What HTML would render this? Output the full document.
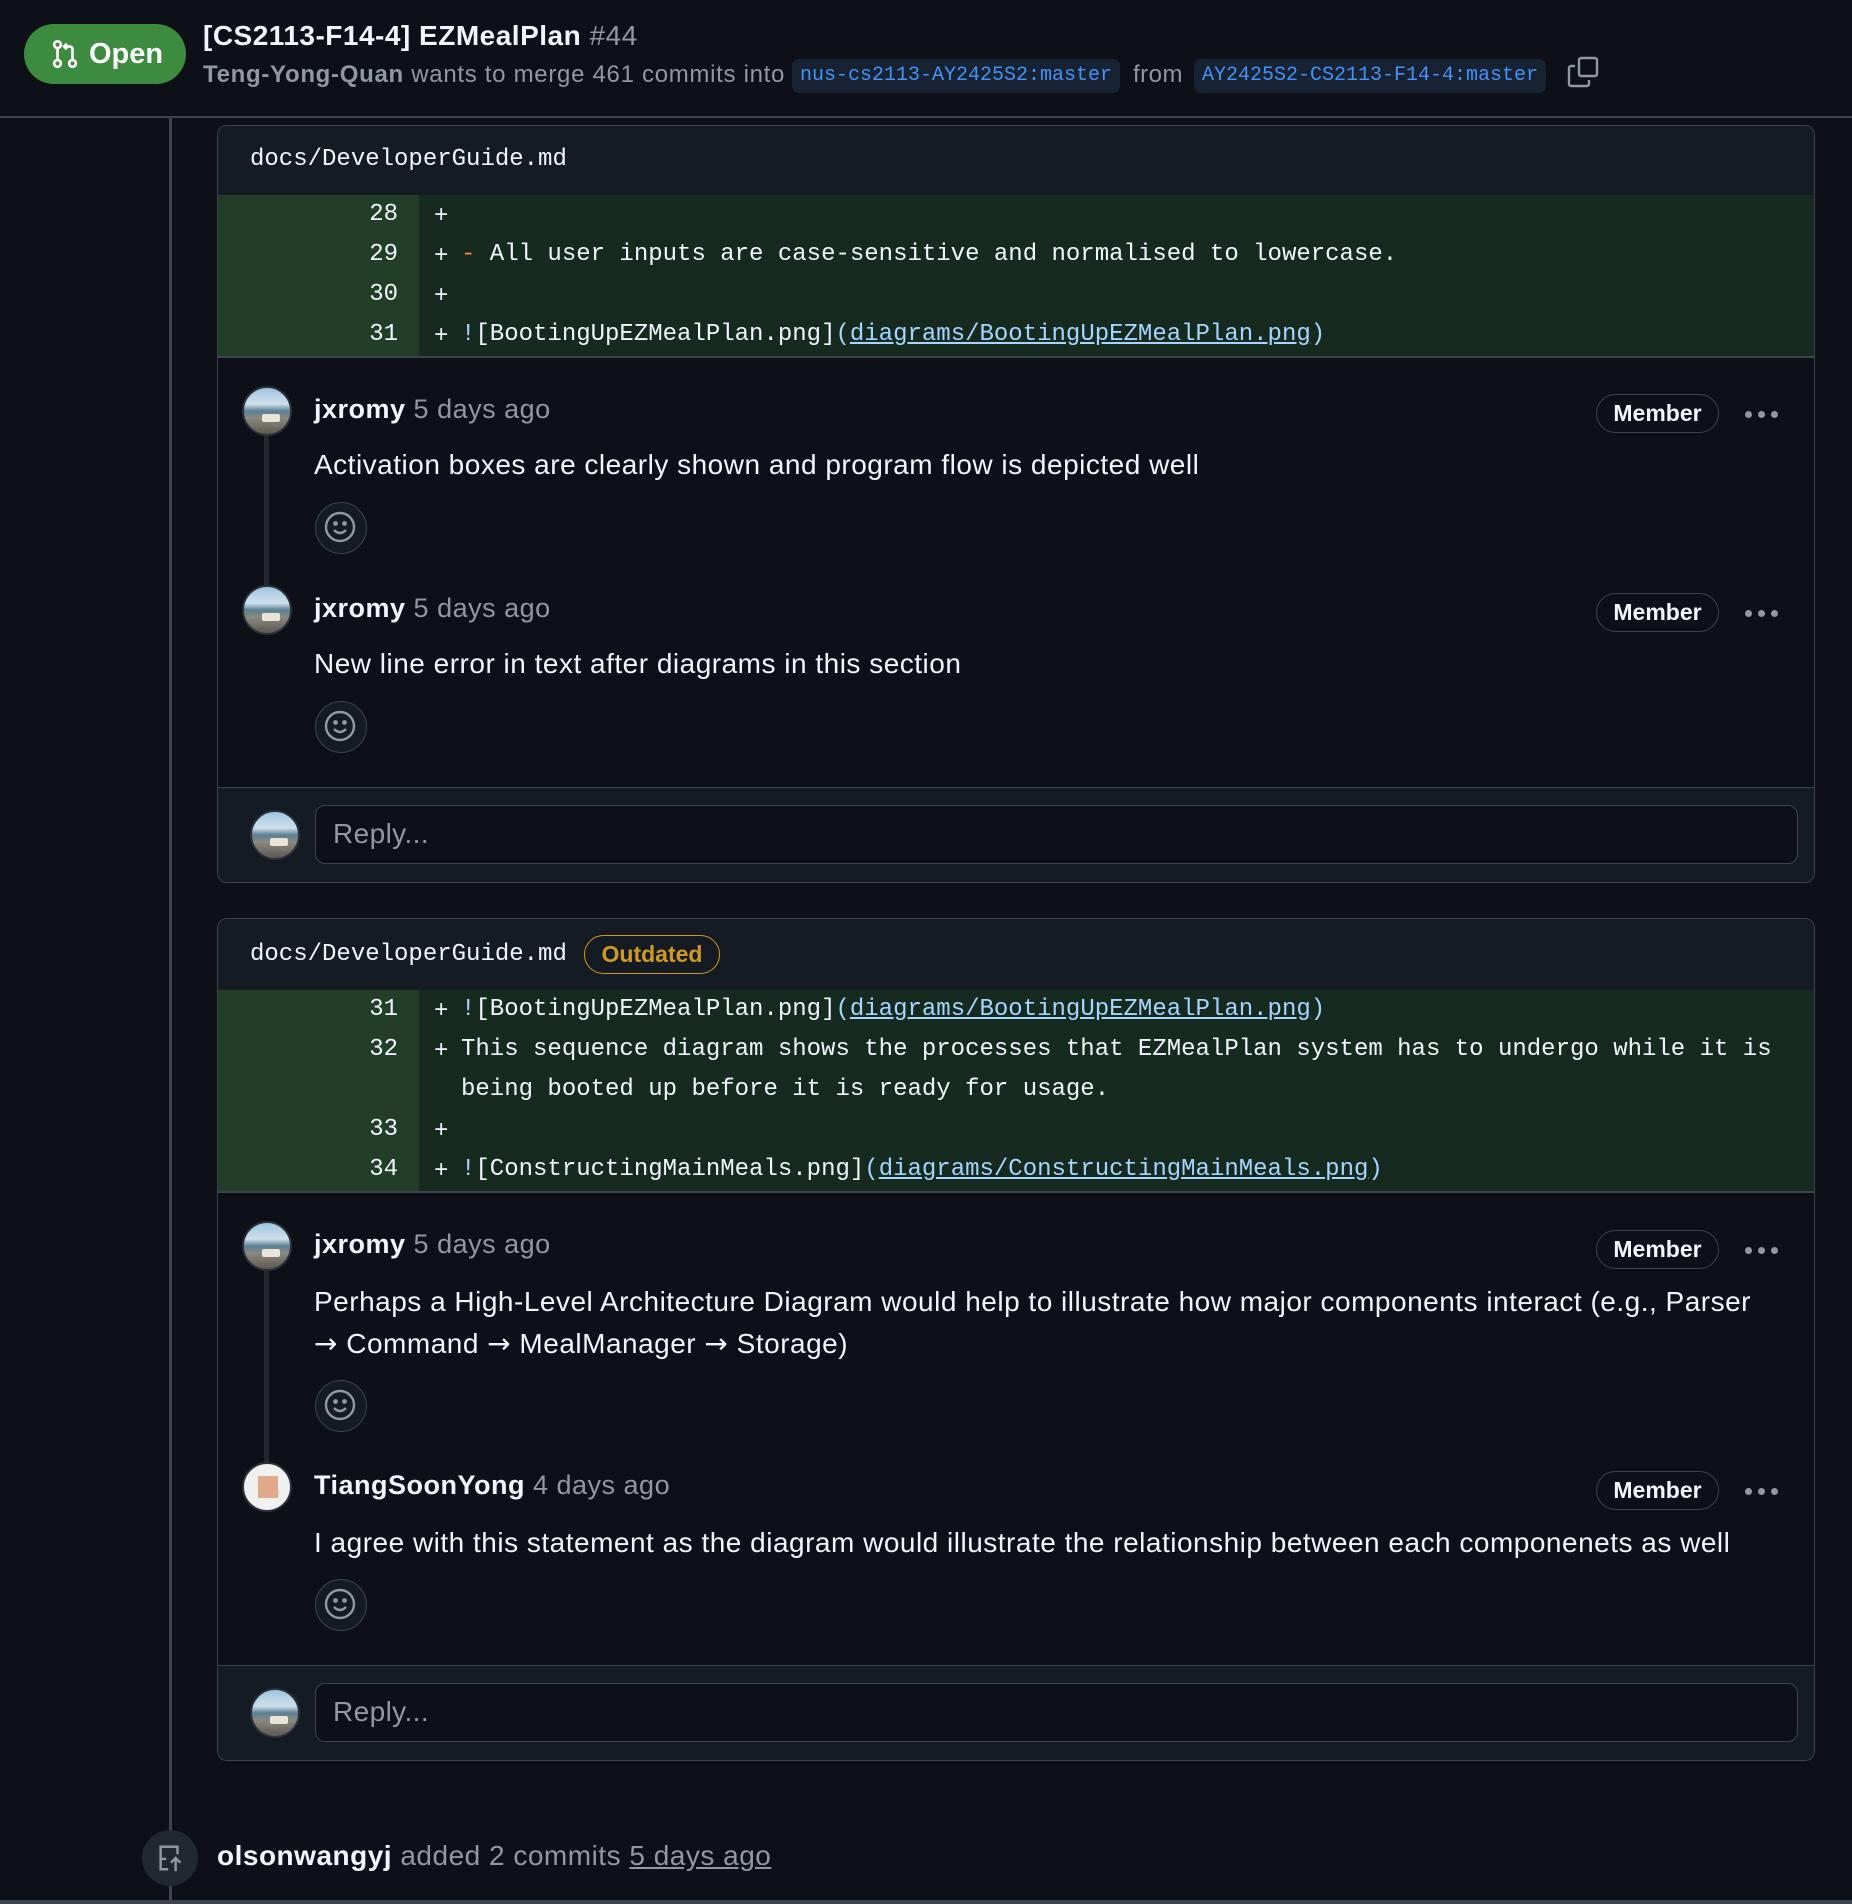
<!DOCTYPE html>
<html><head><meta charset="utf-8">
<style>
*{box-sizing:border-box;margin:0;padding:0}
body{width:1852px;height:1904px;background:#0d1117;position:relative;overflow:hidden;font-family:"Liberation Sans",Arial,sans-serif;color:#f0f6fc}
.a{position:absolute}
.mono{font-family:"Liberation Mono",monospace}
.box{position:absolute;left:217px;width:1598px;border:1.5px solid #3d444d;border-radius:10px;overflow:hidden;background:#0d1117}
.fh{position:absolute;left:0;right:0;top:0;background:#151b23;border-bottom:1.5px solid #3d444d}
.fname{position:absolute;left:32px;font-size:24px;color:#f0f6fc}
.diff{position:absolute;left:0;right:0;background:#172a20}
.num{position:absolute;left:0;width:201px;top:0;bottom:0;background:#233e28}
.ln{position:absolute;left:0;width:180px;text-align:right;font-size:24px;color:#f0f6fc;line-height:40px}
.pl{position:absolute;left:216px;font-size:24px;line-height:40px}
.code{position:absolute;left:243px;font-size:24px;line-height:40px;white-space:pre;color:#f0f6fc}
.lk{color:#a5d6ff;text-decoration:underline}
.br{color:#a5d6ff}
.av{position:absolute;width:50px;height:50px;border-radius:50%;border:2px solid #2a313c;background:linear-gradient(#9fc4df 0%,#cfe0ea 35%,#5a7f94 50%,#8a8a80 65%,#5d574f 100%);overflow:hidden}
.av:after{content:"";position:absolute;left:18px;top:26px;width:18px;height:8px;background:#e8e4da;border-radius:2px}
.name{position:absolute;font-size:27px;font-weight:bold;color:#f0f6fc;white-space:nowrap;letter-spacing:0.5px}
.name span{font-weight:normal;color:#9198a1}
.txt{position:absolute;font-size:28px;letter-spacing:0.5px;color:#f0f6fc;white-space:nowrap;line-height:42px}
.smi{position:absolute;width:52px;height:52px;border-radius:50%;border:1.5px solid #3d444d;background:#151b23}
.mem{position:absolute;width:123px;height:39px;border:1.5px solid #3d444d;border-radius:20px;font-size:23px;font-weight:bold;text-align:center;line-height:36px;color:#f0f6fc}
.dots{position:absolute;width:40px;height:8px}
.dots:before{content:"";position:absolute;left:2px;top:0;width:7px;height:7px;border-radius:50%;background:#9198a1;box-shadow:13px 0 0 #9198a1,26px 0 0 #9198a1}
.vline{position:absolute;width:5px;background:#212830}
.rep{position:absolute;left:0;right:0;background:#151b23;border-top:1.5px solid #3d444d}
.inp{position:absolute;left:97px;right:16px;height:59px;border:1.5px solid #3d444d;border-radius:10px;background:#0d1117;font-size:28px;letter-spacing:0.4px;color:#9198a1;padding-left:17px;line-height:56px}
.pill{position:absolute;top:59px;height:34px;background:#172233;border-radius:7px;color:#4493f8;font-size:20px;line-height:34px;padding:0 8px}
</style></head><body>

<!-- header -->
<div class="a" style="left:24px;top:24px;width:162px;height:60px;background:#3d8b3f;border-radius:30px;"></div>
<svg class="a" style="left:50px;top:38px" width="30" height="32" viewBox="0 0 16 16" fill="none" stroke="#fff" stroke-width="1.4"><circle cx="4" cy="3" r="1.8"/><circle cx="4" cy="13" r="1.8"/><circle cx="12" cy="13" r="1.8"/><path d="M4 5v6M12 11V5.5c0-1-.6-1.5-1.5-1.5H7.5M9 2.5 7.5 4 9 5.5"/></svg>
<div class="a" style="left:89px;top:38px;font-size:29px;font-weight:bold;color:#fff">Open</div>
<div class="a" style="left:203px;top:20px;font-size:28px;font-weight:bold;color:#f0f6fc;white-space:nowrap;letter-spacing:0.5px">[CS2113-F14-4] EZMealPlan <span style="font-weight:normal;color:#9198a1">#44</span></div>
<div class="a" style="left:203px;top:61px;font-size:24px;letter-spacing:0.7px;color:#9198a1;white-space:nowrap"><b style="color:#9198a1">Teng-Yong-Quan</b> wants to merge 461 commits into</div>
<div class="pill mono" style="left:792px">nus-cs2113-AY2425S2:master</div>
<div class="a" style="left:1133px;top:61px;font-size:24px;letter-spacing:0.5px;color:#9198a1">from</div>
<div class="pill mono" style="left:1194px">AY2425S2-CS2113-F14-4:master</div>
<svg class="a" style="left:1567px;top:55px" width="32" height="34" viewBox="0 0 16 16" fill="none" stroke="#9198a1" stroke-width="1.2"><rect x="6" y="1" width="9" height="9" rx="1"/><path d="M4 5H2a1 1 0 0 0-1 1v8a1 1 0 0 0 1 1h8a1 1 0 0 0 1-1v-2"/></svg>
<div class="a" style="left:0;top:116px;width:1852px;height:2px;background:#3d444d"></div>

<!-- timeline -->
<div class="a" style="left:169px;top:118px;width:3px;height:1712px;background:#3d444d"></div>
<div class="a" style="left:169px;top:1884px;width:3px;height:20px;background:#3d444d"></div>

<!-- box 1 -->
<div class="box" style="top:125px;height:758px">
  <div class="fh" style="height:70px"><div class="fname mono" style="top:20px">docs/DeveloperGuide.md</div></div>
  <div class="diff" style="top:69px;height:161px">
    <div class="num"></div>
    <div class="ln mono" style="top:0">28</div><div class="pl mono" style="top:2px">+</div>
    <div class="ln mono" style="top:40px">29</div><div class="pl mono" style="top:42px">+</div><div class="code mono" style="top:40px"><span style="color:#f0883e">-</span> All user inputs are case-sensitive and normalised to lowercase.</div>
    <div class="ln mono" style="top:80px">30</div><div class="pl mono" style="top:82px">+</div>
    <div class="ln mono" style="top:120px">31</div><div class="pl mono" style="top:122px">+</div><div class="code mono" style="top:120px"><span class="br">!</span>[BootingUpEZMealPlan.png]<span class="br">(</span><span class="lk">diagrams/BootingUpEZMealPlan.png</span><span class="br">)</span></div>
  </div>
  <div class="a" style="left:0;right:0;top:230px;height:1.5px;background:#3d444d"></div>

  <div class="vline" style="left:46px;top:300px;height:200px"></div>
  <div class="av" style="left:24px;top:260px"></div>
  <div class="name" style="left:96px;top:268px">jxromy <span>5 days ago</span></div>
  <div class="mem" style="left:1378px;top:268px">Member</div>
  <div class="dots" style="left:1525px;top:285px"></div>
  <div class="txt" style="left:96px;top:318px">Activation boxes are clearly shown and program flow is depicted well</div>
  <div class="smi" style="left:97px;top:376px"></div>

  <div class="av" style="left:24px;top:459px"></div>
  <div class="name" style="left:96px;top:467px">jxromy <span>5 days ago</span></div>
  <div class="mem" style="left:1378px;top:467px">Member</div>
  <div class="dots" style="left:1525px;top:484px"></div>
  <div class="txt" style="left:96px;top:517px">New line error in text after diagrams in this section</div>
  <div class="smi" style="left:97px;top:575px"></div>

  <div class="rep" style="top:661px;height:100px">
    <div class="av" style="left:32px;top:22px"></div>
    <div class="inp" style="top:17px">Reply...</div>
  </div>
</div>

<!-- box 2 -->
<div class="box" style="top:918px;height:843px">
  <div class="fh" style="height:72px"><div class="fname mono" style="top:22px">docs/DeveloperGuide.md</div>
    <div class="a" style="left:366px;top:16px;width:136px;height:39px;border:1.5px solid #d29922;border-radius:20px;color:#d29922;font-size:23px;font-weight:bold;text-align:center;line-height:36px">Outdated</div></div>
  <div class="diff" style="top:71px;height:201px">
    <div class="num"></div>
    <div class="ln mono" style="top:0">31</div><div class="pl mono" style="top:2px">+</div><div class="code mono" style="top:0"><span class="br">!</span>[BootingUpEZMealPlan.png]<span class="br">(</span><span class="lk">diagrams/BootingUpEZMealPlan.png</span><span class="br">)</span></div>
    <div class="ln mono" style="top:40px">32</div><div class="pl mono" style="top:42px">+</div><div class="code mono" style="top:40px">This sequence diagram shows the processes that EZMealPlan system has to undergo while it is</div>
    <div class="code mono" style="top:80px">being booted up before it is ready for usage.</div>
    <div class="ln mono" style="top:120px">33</div><div class="pl mono" style="top:122px">+</div>
    <div class="ln mono" style="top:160px">34</div><div class="pl mono" style="top:162px">+</div><div class="code mono" style="top:160px"><span class="br">!</span>[ConstructingMainMeals.png]<span class="br">(</span><span class="lk">diagrams/ConstructingMainMeals.png</span><span class="br">)</span></div>
  </div>
  <div class="a" style="left:0;right:0;top:272px;height:1.5px;background:#3d444d"></div>

  <div class="vline" style="left:46px;top:340px;height:230px"></div>
  <div class="av" style="left:24px;top:302px"></div>
  <div class="name" style="left:96px;top:310px">jxromy <span>5 days ago</span></div>
  <div class="mem" style="left:1378px;top:311px">Member</div>
  <div class="dots" style="left:1525px;top:328px"></div>
  <div class="txt" style="left:96px;top:362px">Perhaps a High-Level Architecture Diagram would help to illustrate how major components interact (e.g., Parser</div>
  <div class="txt" style="left:96px;top:404px"><span style="font-family:'DejaVu Sans'">→</span> Command <span style="font-family:'DejaVu Sans'">→</span> MealManager <span style="font-family:'DejaVu Sans'">→</span> Storage)</div>
  <div class="smi" style="left:97px;top:461px"></div>

  <div class="av" style="left:24px;top:543px;background:#f0f0f0"></div>
  <div class="a" style="left:40px;top:557px;width:20px;height:22px;background:#e0a98c"></div>
  <div class="name" style="left:96px;top:551px">TiangSoonYong <span>4 days ago</span></div>
  <div class="mem" style="left:1378px;top:552px">Member</div>
  <div class="dots" style="left:1525px;top:569px"></div>
  <div class="txt" style="left:96px;top:603px">I agree with this statement as the diagram would illustrate the relationship between each componenets as well</div>
  <div class="smi" style="left:97px;top:660px"></div>

  <div class="rep" style="top:746px;height:100px">
    <div class="av" style="left:32px;top:22px"></div>
    <div class="inp" style="top:17px">Reply...</div>
  </div>
</div>

<!-- smiley icons -->
<svg width="0" height="0" style="position:absolute"><defs><g id="sm" fill="none" stroke="#9198a1" stroke-width="2.4"><circle cx="18" cy="18" r="14"/><path d="M12 21q6 6 12 0"/><circle cx="13.5" cy="14.5" r="1.2" fill="#9198a1"/><circle cx="22.5" cy="14.5" r="1.2" fill="#9198a1"/></g></defs></svg>
<svg class="a" style="left:322px;top:509px" width="36" height="36"><use href="#sm"/></svg>
<svg class="a" style="left:322px;top:708px" width="36" height="36"><use href="#sm"/></svg>
<svg class="a" style="left:322px;top:1387px" width="36" height="36"><use href="#sm"/></svg>
<svg class="a" style="left:322px;top:1586px" width="36" height="36"><use href="#sm"/></svg>

<!-- bottom event -->
<div class="a" style="left:142px;top:1830px;width:56px;height:56px;border-radius:50%;background:#212830"></div>
<svg class="a" style="left:155px;top:1843px" width="30" height="30" viewBox="0 0 16 16" fill="none" stroke="#9198a1" stroke-width="1.3"><path d="M9 2H3v12h4M3 8.5h3M11 15V8M8.5 10.5 11 8l2.5 2.5"/><path d="M9 2h3v4"/></svg>
<div class="a" style="left:217px;top:1840px;font-size:28px;letter-spacing:0.5px;color:#9198a1;white-space:nowrap"><b style="color:#f0f6fc">olsonwangyj</b> added 2 commits <span style="text-decoration:underline">5 days ago</span></div>
<div class="a" style="left:0;top:1900px;width:1852px;height:4px;background:#3d444d"></div>
</body></html>
